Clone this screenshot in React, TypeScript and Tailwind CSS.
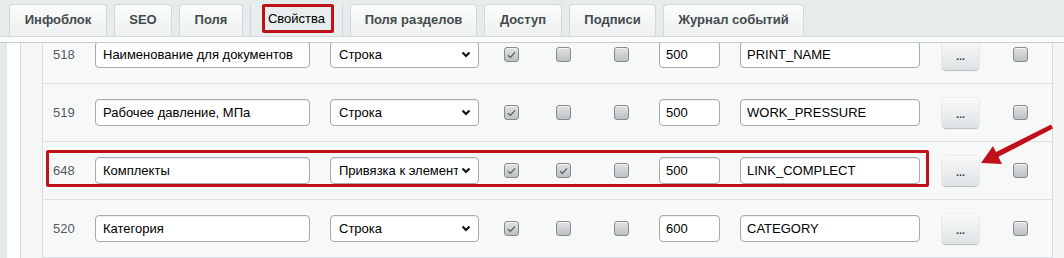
import React from 'react';

type Row = {
  n: string;
  name: string;
  type: string;
  flags: [boolean, boolean, boolean];
  len: string;
  code: string;
  marked?: boolean;
};

const tabs = [
  { label: 'Инфоблок', w: 'w-[98px]' },
  { label: 'SEO', w: 'w-[58px]' },
  { label: 'Поля', w: 'w-[64px]' },
  { label: 'Свойства', w: 'w-[93px]', active: true },
  { label: 'Поля разделов', w: 'w-[127px]' },
  { label: 'Доступ', w: 'w-[78px]' },
  { label: 'Подписи', w: 'w-[87px]' },
  { label: 'Журнал событий', w: 'w-[141px]' },
];

const rows: Row[] = [
  { n: '518', name: 'Наименование для документов', type: 'Строка', flags: [true, false, false], len: '500', code: 'PRINT_NAME' },
  { n: '519', name: 'Рабочее давление, МПа', type: 'Строка', flags: [true, false, false], len: '500', code: 'WORK_PRESSURE' },
  { n: '648', name: 'Комплекты', type: 'Привязка к элемент', flags: [true, true, false], len: '500', code: 'LINK_COMPLECT', marked: true },
  { n: '520', name: 'Категория', type: 'Строка', flags: [true, false, false], len: '600', code: 'CATEGORY' },
];

const Check: React.FC<{ checked?: boolean; className?: string }> = ({ checked, className = '' }) => (
  <div
    className={`w-[15px] h-[15px] shrink-0 rounded-[3px] border border-[#858a8c] bg-linear-to-b from-[#e0e3e4] to-[#bcc1c3] shadow-[inset_0_1px_0_rgba(255,255,255,0.6)] flex items-center justify-center ${className}`}
  >
    {checked && (
      <svg width="9" height="8" viewBox="0 0 9 8">
        <path d="M1 4.2 L3.4 6.4 L8 1.4" stroke="#5a5f61" strokeWidth="1.3" fill="none" />
      </svg>
    )}
  </div>
);

const fieldCls =
  'h-[27px] shrink-0 rounded-[4px] border border-[#a6acae] bg-white shadow-[inset_0_1px_1px_rgba(0,0,0,0.07)] flex items-center text-[13px] text-black overflow-hidden whitespace-nowrap';

export default function App() {
  return (
    <div className="relative w-[1064px] h-[258px] overflow-hidden bg-[#e6ebec] font-['Liberation_Sans',Arial,sans-serif]">
      {/* tabs */}
      <div className="h-[36px] flex items-end gap-[7px] pl-[9px]">
        {tabs.map((t) =>
          t.active ? (
            <div key={t.label} className={`relative h-[32px] ${t.w} border-x border-[#d2d8d9] bg-[#e8edee] flex items-center justify-center pb-[2px] text-[13px] text-black`}>
              {t.label}
              <div className="absolute left-[11px] top-0 w-[72px] h-[29px] border-[3px] border-[#c0111a] rounded-[2px]" />
            </div>
          ) : (
            <div
              key={t.label}
              className={`h-[32px] ${t.w} rounded-t-[4px] border border-b-0 border-[#d3d9da] bg-linear-to-b from-[#fbfcfc] to-[#eef1f1] flex items-center justify-center pb-[2px] text-[13px] font-bold text-[#434b4c]`}
            >
              {t.label}
            </div>
          )
        )}
      </div>
      <div className="h-[6px] border-t border-[#d4dadb] bg-[#fbfcfc]" />

      {/* panel */}
      <div className="flex h-[216px] border-t border-[#c6cdce] shadow-[inset_0_1px_2px_rgba(0,0,0,0.06)]">
        <div className="w-[7px] shrink-0 bg-[#e4e9ea]" />
        <div className="w-[14px] shrink-0 bg-white border-r border-[#d9dfe0]" />
        <div className="w-[22px] shrink-0 bg-[#f5f7f7] border-r border-[#d9dfe0]" />
        <div className="w-[1010px] shrink-0 bg-[#f7f9f9] border-r border-[#d9dfe0] overflow-hidden">
          <div className="-mt-[17px]">
            {rows.map((r) => (
              <div key={r.n} className="relative h-[58px] border-b border-[#dce2e3] flex items-center">
                <div className="w-[52px] shrink-0 pl-[10px] text-[13px] text-[#555b5c]">{r.n}</div>
                <div className={`${fieldCls} w-[215px] pl-[7px]`}>{r.name}</div>
                <div className={`${fieldCls} ml-[20px] w-[149px] pl-[8px] pr-[7px] justify-between`}>
                  <span className="overflow-hidden w-[119px]">{r.type}</span>
                  <svg width="10" height="7" viewBox="0 0 10 7" className="shrink-0">
                    <path d="M1.5 1.5 L5 5 L8.5 1.5" stroke="#111" strokeWidth="2.2" fill="none" />
                  </svg>
                </div>
                <Check checked={r.flags[0]} className="ml-[25px]" />
                <Check checked={r.flags[1]} className="ml-[37px]" />
                <Check checked={r.flags[2]} className="ml-[43px]" />
                <div className={`${fieldCls} ml-[30px] w-[61px] pl-[6px]`}>{r.len}</div>
                <div className={`${fieldCls} ml-[20px] w-[180px] pl-[6px]`}>{r.code}</div>
                <div className="ml-[22px] w-[37px] h-[30px] shrink-0 rounded-[4px] bg-linear-to-b from-[#f9fafa] to-[#dde3e4] shadow-[0_1px_1px_rgba(0,0,0,0.22),0_0_0_1px_rgba(0,0,0,0.04)] flex items-center justify-center pt-[3px] text-[11px] font-bold text-[#3a3f40]">
                  ...
                </div>
                <Check className="ml-[34px]" />
                {r.marked && (
                  <div className="absolute left-[3px] top-[8px] w-[883px] h-[37px] border-[3px] border-[#c0111a] rounded-[2px] pointer-events-none" />
                )}
              </div>
            ))}
          </div>
        </div>
        <div className="flex-1 bg-[#f3f5f5]" />
      </div>

      {/* annotation arrow */}
      <svg className="absolute left-0 top-0 pointer-events-none" width="1064" height="258" viewBox="0 0 1064 258">
        <polygon points="1051,124.5 1053,128.5 997,157.5 995,152.5" fill="#c0111a" />
        <polygon points="981,163 993,146 1002,164" fill="#c0111a" />
      </svg>
    </div>
  );
}
